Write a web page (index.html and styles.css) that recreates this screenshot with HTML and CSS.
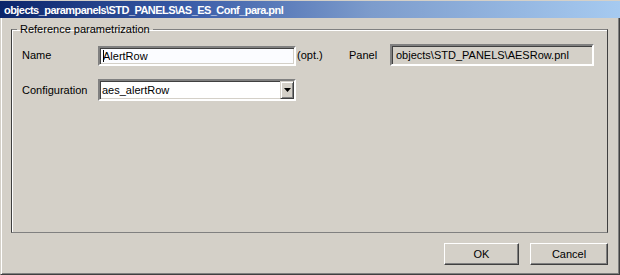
FILE: index.html
```html
<!DOCTYPE html>
<html>
<head>
<meta charset="utf-8">
<link rel="stylesheet" href="styles.css">
</head>
<body>
<div class="window">
  <div class="titlebar"><span class="title">objects_parampanels\STD_PANELS\AS_ES_Conf_para.pnl</span></div>
  <div class="client">
    <fieldset class="group">
      <legend>Reference parametrization</legend>
      <div class="row row-name">
        <span class="label">Name</span>
        <div class="field edit"><span class="caret"></span>AlertRow</div>
        <span class="opt">(opt.)</span>
        <span class="panel-label">Panel</span>
        <div class="field readonly">objects\STD_PANELS\AESRow.pnl</div>
      </div>
      <div class="row row-config">
        <span class="label">Configuration</span>
        <div class="field combo">
          <span class="combo-text">aes_alertRow</span>
          <span class="dropbtn"><svg width="7" height="4" viewBox="0 0 7 4"><path d="M0 0H7L3.5 4Z" fill="#000"/></svg></span>
        </div>
      </div>
    </fieldset>
    <div class="buttons">
      <button class="btn btn-ok">OK</button>
      <button class="btn btn-cancel">Cancel</button>
    </div>
  </div>
</div>
</body>
</html>
```

FILE: styles.css
```css
* { box-sizing: border-box; }
html, body { margin: 0; padding: 0; }
body {
  width: 620px;
  height: 275px;
  overflow: hidden;
  background: #d4d0c8;
  font-family: "Liberation Sans", Arial, sans-serif;
  font-size: 11px;
  color: #000;
}
.window {
  width: 620px;
  height: 275px;
  display: flex;
  flex-direction: column;
}
.titlebar {
  height: 18px;
  flex: none;
  border-top: 1px solid #d4d0c8;
  background: linear-gradient(to right, #0a246a 0%, #3a5ca8 30%, #7d9ccc 60%, #a6caf0 100%);
  color: #fff;
  font-weight: bold;
  font-size: 11px;
  letter-spacing: -0.55px;
  padding-left: 4px;
  display: flex;
  align-items: center;
  white-space: nowrap;
}
.client {
  flex: 1;
  display: flex;
  flex-direction: column;
  border-left: 1px solid #d4d0c8;
  border-right: 1px solid #404040;
  border-bottom: 1px solid #404040;
  box-shadow: inset 1px 0 #fff, inset -1px -1px #808080;
  padding: 5px 11px 9px 10px;
}
.group {
  flex: 1;
  margin: 0;
  min-width: 0;
  padding: 8px 10px 0 10px;
  border: 1px solid;
  border-color: #808080 #404040 #808080 #404040;
  box-shadow: inset 1px 1px #fff;
}
.group legend {
  padding: 0 3px;
  margin-left: -5px;
  line-height: 13px;
}
.row {
  display: flex;
  align-items: center;
}
.row-name { height: 22px; }
.row-config { margin-top: 13px; height: 22px; }
.label { width: 76px; flex: none; }
.field {
  height: 22px;
  border: 2px solid;
  border-color: #808080 #fff #fff #808080;
  box-shadow: inset 1px 1px #404040, inset -1px -1px #d4d0c8;
  display: flex;
  align-items: center;
  white-space: nowrap;
}
.edit {
  width: 198px;
  height: 20px;
  align-self: flex-end;
  background: #fbfcff;
  padding-left: 3px;
  position: relative;
}
.caret {
  position: absolute;
  left: 3px;
  top: 2px;
  width: 1px;
  height: 12px;
  background: #000;
}
.opt { width: 53px; flex: none; padding-left: 1px; }
.panel-label { width: 41px; flex: none; }
.readonly {
  width: 204px;
  background: #d4d0c8;
  padding-left: 4px;
}
.combo {
  width: 198px;
  background: #fff;
  padding-left: 2px;
  justify-content: space-between;
}
.dropbtn {
  width: 14px;
  height: 18px;
  background: #d4d0c8;
  border: 1px solid;
  border-color: #d4d0c8 #404040 #404040 #d4d0c8;
  box-shadow: inset 1px 1px #fff, inset -1px -1px #808080;
  display: flex;
  align-items: center;
  justify-content: center;
}
.dropbtn svg { display: block; }
.buttons {
  display: flex;
  justify-content: flex-end;
  gap: 11px;
  margin-top: 10px;
  flex: none;
}
.btn {
  height: 22px;
  margin: 0;
  padding: 0;
  font-family: "Liberation Sans", Arial, sans-serif;
  font-size: 11px;
  color: #000;
  background: #d4d0c8;
  border: 1px solid;
  border-color: #fff #404040 #404040 #fff;
  box-shadow: inset -1px -1px #808080;
}
.btn-ok { width: 75px; }
.btn-cancel { width: 78px; }
```
